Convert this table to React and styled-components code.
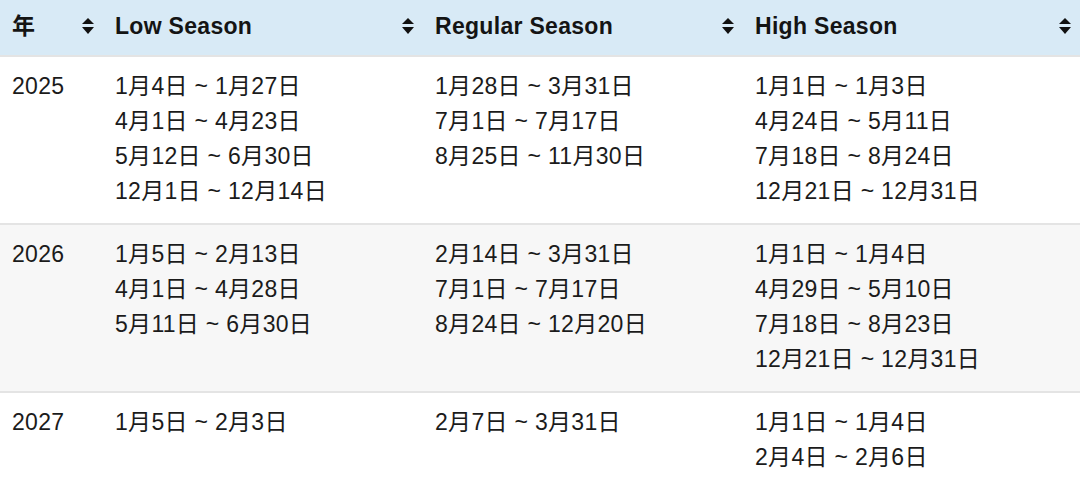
import React from 'react';
import styled, { createGlobalStyle } from 'styled-components';

const GlobalStyle = createGlobalStyle`
  html, body {
    margin: 0;
    padding: 0;
    background: #fff;
  }
  body {
    font-family: 'Liberation Sans', 'Noto Sans CJK JP', sans-serif;
    color: #1b1b1b;
  }
`;

const Table = styled.table`
  width: 1080px;
  border-collapse: collapse;
  table-layout: fixed;
  font-size: 23px;
  line-height: 35px;
  letter-spacing: 0.3px;
`;

const HeadRow = styled.tr`
  background: #d8eaf6;
  border-bottom: 2px solid #e4e4e4;
`;

const HeadCell = styled.th`
  height: 56px;
  padding: 0 9px 0 12px;
  text-align: left;
  font-weight: 700;
  color: #141414;
  box-sizing: border-box;
`;

const HeadInner = styled.div`
  display: flex;
  align-items: center;
  justify-content: space-between;
  margin-top: -3px;
`;

const Row = styled.tr`
  background: ${(p) => (p.$striped ? '#f7f7f7' : '#ffffff')};
  border-bottom: ${(p) => (p.$last ? 'none' : '2px solid #e4e4e4')};
`;

const Cell = styled.td`
  vertical-align: top;
  padding: 12px 12px 14px 12px;
`;

const Line = styled.div`
  white-space: nowrap;
`;

const SortIcon = () => (
  <svg width="12" height="16" viewBox="0 0 12 16">
    <polygon points="6,0 12,6 0,6" fill="#111" />
    <polygon points="0,9 12,9 6,16" fill="#111" />
  </svg>
);

const columns = ['年', 'Low Season', 'Regular Season', 'High Season'];
const widths = [103, 320, 320, 337];

const rows = [
  {
    year: '2025',
    low: ['1月4日 ~ 1月27日', '4月1日 ~ 4月23日', '5月12日 ~ 6月30日', '12月1日 ~ 12月14日'],
    regular: ['1月28日 ~ 3月31日', '7月1日 ~ 7月17日', '8月25日 ~ 11月30日'],
    high: ['1月1日 ~ 1月3日', '4月24日 ~ 5月11日', '7月18日 ~ 8月24日', '12月21日 ~ 12月31日'],
  },
  {
    year: '2026',
    low: ['1月5日 ~ 2月13日', '4月1日 ~ 4月28日', '5月11日 ~ 6月30日'],
    regular: ['2月14日 ~ 3月31日', '7月1日 ~ 7月17日', '8月24日 ~ 12月20日'],
    high: ['1月1日 ~ 1月4日', '4月29日 ~ 5月10日', '7月18日 ~ 8月23日', '12月21日 ~ 12月31日'],
  },
  {
    year: '2027',
    low: ['1月5日 ~ 2月3日'],
    regular: ['2月7日 ~ 3月31日'],
    high: ['1月1日 ~ 1月4日', '2月4日 ~ 2月6日'],
  },
];

const App = () => {
  return (
    <>
      <GlobalStyle />
      <Table>
        <colgroup>
          {widths.map((w, i) => (
            <col key={i} style={{ width: w }} />
          ))}
        </colgroup>
        <thead>
          <HeadRow>
            {columns.map((c) => (
              <HeadCell key={c}>
                <HeadInner>
                  <span>{c}</span>
                  <SortIcon />
                </HeadInner>
              </HeadCell>
            ))}
          </HeadRow>
        </thead>
        <tbody>
          {rows.map((r, i) => (
            <Row key={r.year} $striped={i % 2 === 1} $last={i === rows.length - 1}>
              <Cell>{r.year}</Cell>
              <Cell>
                {r.low.map((l) => (
                  <Line key={l}>{l}</Line>
                ))}
              </Cell>
              <Cell>
                {r.regular.map((l) => (
                  <Line key={l}>{l}</Line>
                ))}
              </Cell>
              <Cell>
                {r.high.map((l) => (
                  <Line key={l}>{l}</Line>
                ))}
              </Cell>
            </Row>
          ))}
        </tbody>
      </Table>
    </>
  );
};

export default App;
